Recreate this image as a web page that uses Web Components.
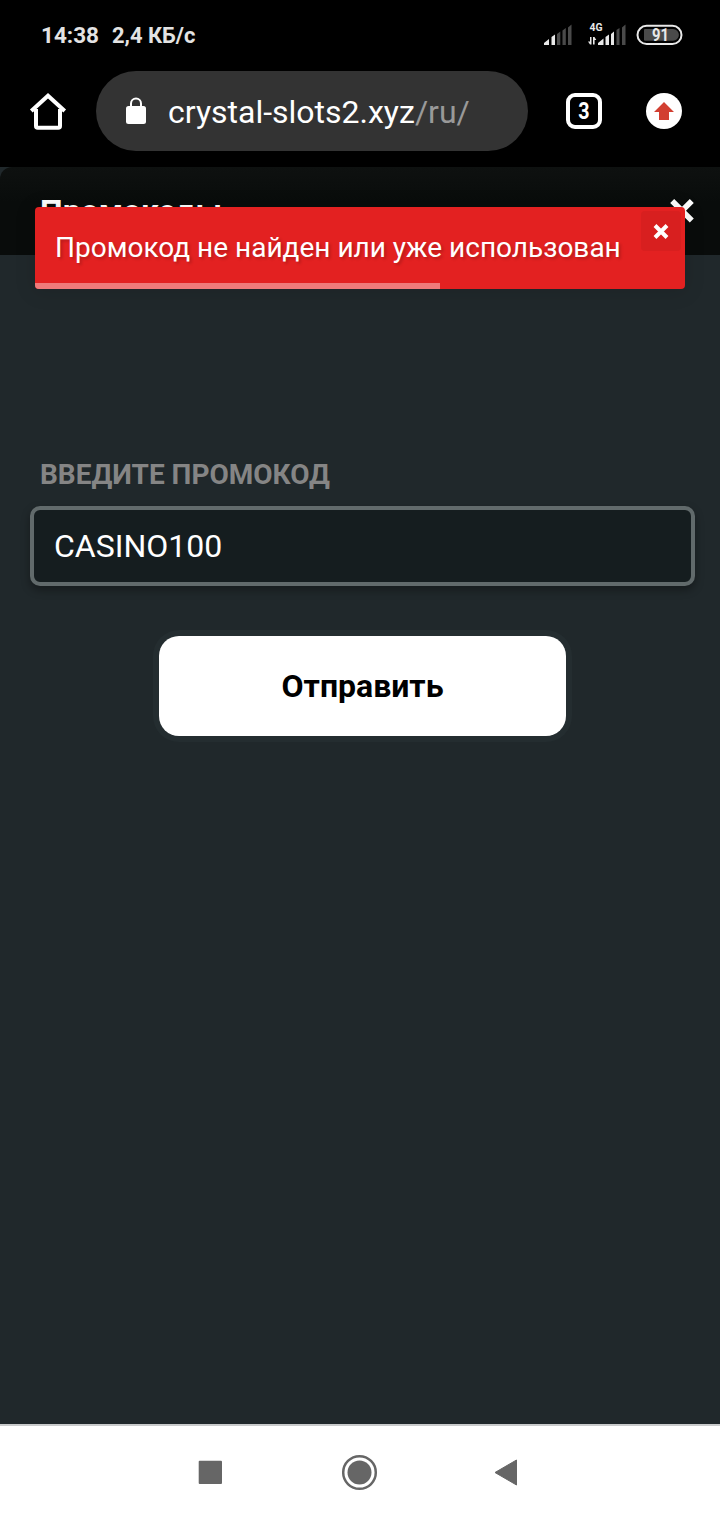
<!DOCTYPE html>
<html lang="ru">
<head>
<meta charset="utf-8">
<title>Промокоды</title>
<style>
html,body{margin:0;background:#20282b;font-family:Roboto,"Noto Sans",sans-serif}
</style>
</head>
<body>
<phone-screen></phone-screen>
<script>
const define = (name, css, html) => customElements.define(name, class extends HTMLElement {
  constructor() {
    super();
    this.attachShadow({mode: 'open'}).innerHTML =
      `<style>*{box-sizing:border-box}:host{box-sizing:border-box;display:block}svg{display:block}${css}</style>${html}`;
  }
});

define('status-bar', `
:host{display:flex;align-items:center;height:71px;padding:0 37px 0 41px;color:#e3e3e3;font-weight:700;font-size:22.5px;line-height:28px;white-space:nowrap}
.time{padding-bottom:2px}
.speed{margin-left:13px;font-size:21.900px}
.right{margin-left:auto}`, `
<span class="time">14:38</span><span class="speed">2,4 КБ/с</span>
<svg class="right" width="140" height="28" viewBox="543 22 140 28" fill="#e8e8e8">
 <path d="M544 45v-2l5-4v6zM551.500 45v-8l3.500-2.500v10.500z"/>
 <path fill="#4a4a4a" d="M557 45v-11l3.300-2.500v13.500zM562.500 45v-14.500l3.300-2.500v17zM568 45v-17.500l3.500-3v20.500z"/>
 <text x="589.500" y="30.500" font-size="10" textLength="13" lengthAdjust="spacingAndGlyphs">4G</text>
 <path d="M591.500 37v7.500h-1.500l-2-3h2v-4.500zM593 37h1.500l1.800 3h-1.700v4.500h-1.600z"/>
 <path d="M598 45v-2l5.500-4.500v6.500zM605.500 45v-8l3.500-2.500v10.500zM611 45v-11l3-2.500v13.500z"/>
 <path fill="#4a4a4a" d="M616.500 45v-15l3-2v17zM622 45v-17.500l3.500-3v20.500z"/>
 <rect x="637.500" y="25.800" width="44" height="18.200" rx="9.100" fill="none" stroke="#e8e8e8" stroke-width="2"/>
 <path fill="#4a4a4a" d="M645 29h28a5.900 5.900 0 0 1 0 11.800h-28a1 1 0 0 1-1-1v-9.800a1 1 0 0 1 1-1z"/>
 <text x="652" y="41" font-size="17.500" textLength="17" lengthAdjust="spacingAndGlyphs">91</text>
</svg>`);

define('address-bar', `
:host{display:flex;align-items:center;height:80px;flex:none;width:432px;background:#333;border-radius:40px;padding-left:29px;font-size:32px;line-height:40px;color:#fff;white-space:nowrap}
svg{margin-right:21px}
.url{padding-top:1px}
.path{color:#999}`, `
<svg width="22" height="28" viewBox="0 0 22 28"><rect x="1" y="9" width="20" height="18" rx="2.500" fill="#fff"/><path d="M6 10V6.500a5 5 0 0 1 10 0V10" fill="none" stroke="#fff" stroke-width="2"/></svg>
<span class="url"><slot></slot><span class="path"><slot name="path"></slot></span></span>`);

define('browser-toolbar', `
:host{display:flex;height:96px;align-items:flex-start}
.home{margin:20px 28px 0 28px}
.tabs{margin:22px 0 0 38px;width:36px;height:36px;border:4px solid #fff;border-radius:9px;color:#fff;font-weight:700;font-size:24px;line-height:28px;text-align:center}
.tabs span{display:inline-block;transform:scaleX(.82)}
.update{margin:22px 0 0 44px}`, `
<svg class="home" width="40" height="40" viewBox="0 0 40 40" fill="none" stroke="#fff" stroke-width="4"><path d="M8 18v17a1.800 1.800 0 0 0 1.800 1.800h20.400a1.800 1.800 0 0 0 1.800-1.800V18"/><path d="M3.300 20 20 4.800l16.700 15.200" stroke-linecap="butt"/></svg>
<address-bar>crystal-slots2.xyz<span slot="path">/ru/</span></address-bar>
<div class="tabs"><span>3</span></div>
<svg class="update" width="36" height="36" viewBox="0 0 36 36"><circle cx="18" cy="18" r="18" fill="#fff"/><path d="M18 9 28 19h-5v8H13v-8H8z" fill="#d23f31"/></svg>`);

define('page-header', `
:host{height:88px;background:linear-gradient(#0e1110,#090c0b 40%,#090c0b);border-radius:12px 0 0 0;display:flex;justify-content:space-between;padding:24px 26px 0 40px;color:#fff;font-weight:700;font-size:32px;line-height:40px}
svg{margin-top:7px}`, `
<span><slot></slot></span>
<svg width="24" height="26" viewBox="0 0 24 26" stroke="#fff" stroke-width="5.600"><path d="M2.200 3l19.600 19.600M21.800 3l-19.600 19.600"/></svg>`);

define('toast-message', `
:host{position:absolute;left:35px;top:207px;width:650px;height:82px;border-radius:4px;background:#e32121;overflow:hidden;color:#fff;font-size:28px;line-height:36px;padding:23px 20px;white-space:nowrap;text-shadow:2px 2px 3px rgba(0,0,0,.2);box-shadow:0 2px 20px 2px rgba(0,0,0,.1)}
.close{position:absolute;left:606px;top:4px;width:40px;height:40px;border-radius:4px;background:#d81f1f;padding:13px 12px}
.bar{position:absolute;left:0;bottom:0;width:405px;height:6px;background:#f07a7a}`, `
<span class="msg"><slot></slot></span>
<div class="close"><svg width="16" height="15" viewBox="0 0 16 15" stroke="#fff" stroke-width="4"><path d="M2 1.500l12 12M14 1.500l-12 12"/></svg></div>
<div class="bar"></div>`);

define('promo-field', `
:host{padding:0 25px 0 30px}
.label{padding-left:10px;color:#858585;font-size:28px;line-height:36px;font-weight:700;text-transform:uppercase}
.input{margin-top:13px;height:80px;border:4px solid #616a6b;border-radius:10px;background:#151d1f;color:#fff;font-size:32px;line-height:72px;padding-left:20px;box-shadow:0 4px 8px rgba(0,0,0,.35)}`, `
<div class="label"><slot name="label"></slot></div>
<div class="input"><slot></slot></div>`);

define('submit-button', `
:host{margin:50px 0 0 159px;width:407px;height:100px;border-radius:20px;background:#fff;box-shadow:0 0 0 6px #242d30;color:#000;font-size:32px;font-weight:700;line-height:100px;text-align:center}`, `<span><slot></slot></span>`);

define('system-nav', `
:host{height:96px;background:#fff;border-top:2px solid #c9cbcc}`, `
<svg width="720" height="94" viewBox="0 1426 720 94" fill="#666"><rect x="198.700" y="1460.700" width="23.300" height="23.300" rx="1"/><circle cx="359.500" cy="1472.500" r="12"/><circle cx="359.500" cy="1472.500" r="16.300" fill="none" stroke="#666" stroke-width="2.500"/><path d="M495 1472.500 516.500 1460v25z" stroke="#666" stroke-width="1" stroke-linejoin="round"/></svg>`);

define('phone-screen', `
:host{position:relative;width:720px;height:1520px;overflow:hidden;display:flex;flex-direction:column;background:#20282b}
.chrome{background:#000;height:167px;flex:none}
.content{flex:1;padding-top:202px}`, `
<div class="chrome"><status-bar></status-bar><browser-toolbar></browser-toolbar></div>
<page-header>Промокоды</page-header>
<main class="content">
<promo-field><span slot="label">Введите промокод</span>CASINO100</promo-field>
<submit-button>Отправить</submit-button>
</main>
<system-nav></system-nav>
<toast-message>Промокод не найден или уже использован</toast-message>`);
</script>
</body>
</html>
